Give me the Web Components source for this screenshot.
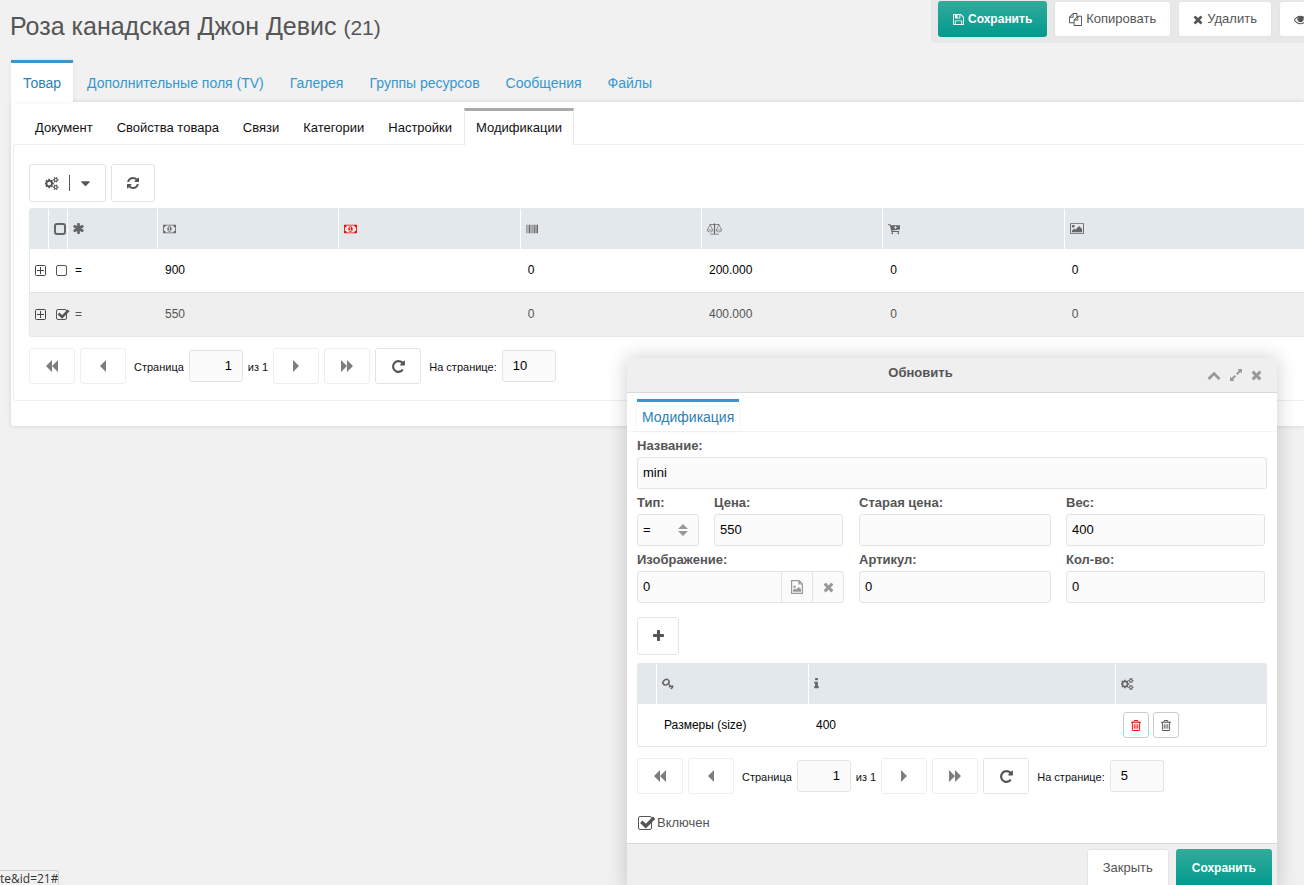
<!DOCTYPE html>
<html lang="ru">
<head>
<meta charset="utf-8">
<title>Роза канадская Джон Девис</title>
<style>
  html, body { height: 100%; }
  body { margin: 0; overflow: hidden; background: #f1f1f1; color: #555; font: 13px/16px "Liberation Sans", Arial, sans-serif; }
</style>
</head>
<body>
<product-page></product-page>

<script>
const define = (name, html, setup) => {
  const template = document.createElement('template');
  template.innerHTML = '<style>*{box-sizing:border-box}:host([hidden]){display:none}</style>' + html;
  customElements.define(name, class extends HTMLElement {
    connectedCallback() {
      if (this.shadowRoot) return;
      const root = this.attachShadow({ mode: 'open' });
      root.append(template.content.cloneNode(true));
      if (setup) setup(this, root);
    }
  });
};

/* name: [viewBox, markup] */
const ICONS = {
  save: ['128 0 1536 1792', '<path d="M512 1536h768v-384h-768v384zm896 0h128v-896q0-14-10-38.5t-20-34.5l-281-281q-10-10-34-20t-39-10v416q0 40-28 68t-68 28h-576q-40 0-68-28t-28-68v-416h-128v1280h128v-416q0-40 28-68t68-28h832q40 0 68 28t28 68v416zm-384-928v-320q0-13-9.5-22.5t-22.5-9.5h-192q-13 0-22.5 9.5t-9.5 22.5v320q0 13 9.5 22.5t22.5 9.5h192q13 0 22.5-9.5t9.5-22.5zm640 32v928q0 40-28 68t-68 28h-1344q-40 0-68-28t-28-68v-1344q0-40 28-68t68-28h928q40 0 88 20t76 48l280 280q28 28 48 76t20 88z"/>'],
  copy: ['0 0 1792 1792', '<path d="M1696 384q40 0 68 28t28 68v1216q0 40-28 68t-68 28h-960q-40 0-68-28t-28-68v-288h-544q-40 0-68-28t-28-68v-672q0-40 20-88t48-76l408-408q28-28 76-48t88-20h416q40 0 68 28t28 68v328q68-40 128-40h416zm-544 213l-299 299h299v-299zm-640-384l-299 299h299v-299zm196 647l316-316v-416h-384v416q0 40-28 68t-68 28h-416v640h512v-256q0-40 20-88t48-76zm956 804v-1152h-384v416q0 40-28 68t-68 28h-416v640h896z"/>'],
  times: ['192 0 1408 1792', '<path d="M1490 1322q0 40-28 68l-136 136q-28 28-68 28t-68-28l-294-294-294 294q-28 28-68 28t-68-28l-136-136q-28-28-28-68t28-68l294-294-294-294q-28-28-28-68t28-68l136-136q28-28 68-28t68 28l294 294 294-294q28-28 68-28t68 28l136 136q28 28 28 68t-28 68l-294 294 294 294q28 28 28 68z"/>'],
  eye: ['0 0 1792 1792', '<path d="M1664 960q-152-236-381-353 61 104 61 225 0 185-131.5 316.5t-316.5 131.5-316.5-131.5-131.5-316.5q0-121 61-225-229 117-381 353 133 205 333.5 326.5t434.5 121.5 434.5-121.5 333.5-326.5zm-720-384q0-20-14-34t-34-14q-125 0-214.5 89.5t-89.5 214.5q0 20 14 34t34 14 34-14 14-34q0-86 61-147t147-61q20 0 34-14t14-34zm848 384q0 34-20 69-140 230-376.5 368.5t-499.5 138.5-499.5-139-376.5-368q-20-35-20-69t20-69q140-229 376.5-368t499.5-139 499.5 139 376.5 368q20 35 20 69z"/><circle cx="896" cy="860" r="330"/>'],
  cogs: ['0 0 1920 1792', '<path d="M832 896q0-106-75-181t-181-75-181 75-75 181 75 181 181 75 181-75 75-181zm768 512q0-52-38-90t-90-38-90 38-38 90q0 53 37.5 90.5t90.5 37.5 90.5-37.5 37.5-90.5zm0-1024q0-52-38-90t-90-38-90 38-38 90q0 53 37.5 90.5t90.5 37.5 90.5-37.5 37.5-90.5zm-384 421v185q0 10-7 19.5t-16 10.5l-155 24q-11 35-32 76 34 48 90 115 7 11 7 20 0 12-7 19-23 30-82.5 89.5t-78.5 59.5q-11 0-21-7l-115-90q-37 19-77 31-11 108-23 155-7 24-30 24h-186q-11 0-20-7.5t-10-17.5l-23-153q-34-10-75-31l-118 89q-7 7-20 7-11 0-21-8-144-133-144-160 0-9 7-19 10-14 41-53t47-61q-23-44-35-82l-152-24q-10-1-17-9.5t-7-19.5v-185q0-10 7-19.5t16-10.5l155-24q11-35 32-76-34-48-90-115-7-11-7-20 0-12 7-20 22-30 82-89t79-59q11 0 21 7l115 90q34-18 77-32 11-108 23-154 7-24 30-24h186q11 0 20 7.5t10 17.5l23 153q34 10 75 31l118-89q8-7 20-7 11 0 21 8 144 133 144 160 0 8-7 19-12 16-42 54t-45 60q23 48 34 82l152 23q10 2 17 10.5t7 19.5zm640 533v140q0 16-149 31-12 27-30 52 51 113 51 138 0 4-4 7-122 71-124 71-8 0-46-47t-52-68q-20 2-30 2t-30-2q-14 21-52 68t-46 47q-2 0-124-71-4-3-4-7 0-25 51-138-18-25-30-52-149-15-149-31v-140q0-16 149-31 13-29 30-52-51-113-51-138 0-4 4-7 4-2 35-20t59-34 30-16q8 0 46 46.5t52 67.5q20-2 30-2t30 2q51-71 92-112l6-2q4 0 124 70 4 3 4 7 0 25-51 138 17 23 30 52 149 15 149 31zm0-1024v140q0 16-149 31-12 27-30 52 51 113 51 138 0 4-4 7-122 71-124 71-8 0-46-47t-52-68q-20 2-30 2t-30-2q-14 21-52 68t-46 47q-2 0-124-71-4-3-4-7 0-25 51-138-18-25-30-52-149-15-149-31v-140q0-16 149-31 13-29 30-52-51-113-51-138 0-4 4-7 4-2 35-20t59-34 30-16q8 0 46 46.5t52 67.5q20-2 30-2t30 2q51-71 92-112l6-2q4 0 124 70 4 3 4 7 0 25-51 138 17 23 30 52 149 15 149 31z"/>'],
  refresh: ['128 0 1536 1792', '<path d="M1639 1056q0 5-1 7-64 268-268 434.5t-478 166.5q-146 0-282.5-55t-243.5-157l-129 129q-19 19-45 19t-45-19-19-45v-448q0-26 19-45t45-19h448q26 0 45 19t19 45-19 45l-137 137q71 66 161 102t187 36q134 0 250-65t186-179q11-17 53-117 8-23 30-23h192q13 0 22.5 9.5t9.5 22.5zm25-800v448q0 26-19 45t-45 19h-448q-26 0-45-19t-19-45 19-45l138-138q-148-137-349-137-134 0-250 65t-186 179q-11 17-53 117-8 23-30 23h-199q-13 0-22.5-9.5t-9.5-22.5v-7q65-268 270-434.5t480-166.5q146 0 284 55.5t245 156.5l130-129q19-19 45-19t45 19 19 45z"/>'],
  caret: ['384 0 1024 1792', '<path d="M1408 704q0 26-19 45l-448 448q-19 19-45 19t-45-19l-448-448q-19-19-19-45t19-45 45-19h896q26 0 45 19t19 45z"/>'],
  asterisk: ['170 0 1450 1792', '<path d="M1546 1050q46 26 59.5 77.5t-12.5 97.5l-64 110q-26 46-77.5 59.5t-97.5-12.5l-266-153v307q0 52-38 90t-90 38h-128q-52 0-90-38t-38-90v-307l-266 153q-46 26-97.5 12.5t-77.5-59.5l-64-110q-26-46-12.5-97.5t59.5-77.5l266-154-266-154q-46-26-59.5-77.5t12.5-97.5l64-110q26-46 77.5-59.5t97.5 12.5l266 153v-307q0-52 38-90t90-38h128q52 0 90 38t38 90v307l266-153q46-26 97.5-12.5t77.5 59.5l64 110q26 46 12.5 97.5t-59.5 77.5l-266 154z"/>'],
  money: ['0 0 1920 1792', '<path d="M768 1152h384v-96h-128v-448h-114l-148 137 77 80q42-37 55-57h2v288h-128v96zm512-256q0 70-21 142t-59.5 134-101.5 101-138 39-138-39-101.5-101-59.5-134-21-142 21-142 59.5-134 101.5-101 138-39 138 39 101.5 101 59.5 134 21 142zm512 256v-512q-106 0-181-75t-75-181h-1152q0 106-75 181t-181 75v512q106 0 181 75t75 181h1152q0-106 75-181t181-75zm128-832v1152q0 26-19 45t-45 19h-1792q-26 0-45-19t-19-45v-1152q0-26 19-45t45-19h1792q26 0 45 19t19 45z"/>'],
  barcode: ['0 0 1792 1792', '<path d="M0 256h80v1280H0zM150 256h60v1280h-60zM300 256h60v1280h-60zM450 256h150v1280H450zM670 256h60v1280h-60zM830 256h150v1280H830zM1070 256h60v1280h-60zM1220 256h150v1280h-150zM1440 256h70v1280h-70zM1570 256h222v1280h-222z"/>'],
  scales: ['0 0 2304 1792', '<path d="M1080 0h144v130h660v110h-640v1380h560v130H500v-130h560V240H420V130h660z"/><path d="M60 1050L470 230l410 820M1424 1050l410-820 410 820" fill="none" stroke="currentColor" stroke-width="100"/><path d="M0 1050h940q-30 300-470 300T0 1050zm1364 0h940q-30 300-470 300t-470-300z" fill="none" stroke="currentColor" stroke-width="90"/>'],
  cart: ['0 0 1792 1792', '<path fill-rule="evenodd" d="M0 192h360l60 160h1372v610l-1150 170 20 80h1010v130H520L270 330H0zM1060 460v160H900v110h160v160h120V730h160V620h-160V460z"/><circle cx="640" cy="1540" r="135"/><circle cx="1540" cy="1540" r="135"/><path d="M570 1250h130v200H570zm900 0h130v200h-130z"/>'],
  picture: ['-64 0 1920 1792', '<path d="M576 576q0 80-56 136t-136 56-136-56-56-136 56-136 136-56 136 56 56 136zm1024 384v448h-1408v-192l320-320 160 160 512-512zm96-704h-1600q-13 0-22.5 9.5t-9.5 22.5v1216q0 13 9.5 22.5t22.5 9.5h1600q13 0 22.5-9.5t9.5-22.5v-1216q0-13-9.5-22.5t-22.5-9.5zm160 32v1216q0 66-47 113t-113 47h-1600q-66 0-113-47t-47-113v-1216q0-66 47-113t113-47h1600q66 0 113 47t47 113z"/>'],
  repeat: ['128 0 1536 1792', '<path d="M1664 256v448q0 26-19 45t-45 19h-448q-42 0-59-40-17-39 14-69l138-138q-148-137-349-137-104 0-198.5 40.5t-163.5 109.5-109.5 163.5-40.5 198.5 40.5 198.5 109.5 163.5 163.5 109.5 198.5 40.5q119 0 225-52t179-147q7-10 23-12 15 0 25 9l137 138q9 8 9.5 20.5t-7.5 22.5q-109 132-264 204.5t-327 72.5q-156 0-298-61t-245-164-164-245-61-298 61-298 164-245 245-164 298-61q147 0 284.5 55.5t244.5 156.5l130-129q29-31 70-14 39 17 39 59z"/>'],
  plus: ['192 0 1408 1792', '<path d="M1600 736v192q0 40-28 68t-68 28h-416v416q0 40-28 68t-68 28h-192q-40 0-68-28t-28-68v-416h-416q-40 0-68-28t-28-68v-192q0-40 28-68t68-28h416v-416q0-40 28-68t68-28h192q40 0 68 28t28 68v416h416q40 0 68 28t28 68z"/>'],
  up: ['0 0 1792 1792', '<path d="M1683 1331l-166 165q-19 19-45 19t-45-19l-531-531-531 531q-19 19-45 19t-45-19l-166-165q-19-19-19-45.5t19-45.5l742-741q19-19 45-19t45 19l742 741q19 19 19 45.5t-19 45.5z"/>'],
  expand: ['0 0 14 14', '<path d="M8.500 1H13v4.500l-1.500-1.500-3 3L7 5.500l3-3zM5.500 13H1V8.500L2.500 10l3-3L7 8.500l-3 3z"/>'],
  trash: ['192 0 1408 1792', '<path d="M704 736v576q0 14-9 23t-23 9h-64q-14 0-23-9t-9-23v-576q0-14 9-23t23-9h64q14 0 23 9t9 23zm256 0v576q0 14-9 23t-23 9h-64q-14 0-23-9t-9-23v-576q0-14 9-23t23-9h64q14 0 23 9t9 23zm256 0v576q0 14-9 23t-23 9h-64q-14 0-23-9t-9-23v-576q0-14 9-23t23-9h64q14 0 23 9t9 23zm128 724v-948h-896v948q0 22 7 40.5t14.5 27 10.5 8.5h832q3 0 10.5-8.5t14.5-27 7-40.5zm-672-1076h448l-48-117q-7-9-17-11h-317q-10 2-17 11zm928 32v64q0 14-9 23t-23 9h-96v948q0 83-47 143.5t-113 60.5h-832q-66 0-113-58.5t-47-141.5v-952h-96q-14 0-23-9t-9-23v-64q0-14 9-23t23-9h309l70-167q15-37 54-63t79-26h320q40 0 79 26t54 63l70 167h309q14 0 23 9t9 23z"/>'],
  info: ['576 0 640 1792', '<path d="M1216 1344v128q0 26-19 45t-45 19h-512q-26 0-45-19t-19-45v-128q0-26 19-45t45-19h64v-384h-64q-26 0-45-19t-19-45v-128q0-26 19-45t45-19h384q26 0 45 19t19 45v576h64q26 0 45 19t19 45zm-128-1152v192q0 26-19 45t-45 19h-256q-26 0-45-19t-19-45v-192q0-26 19-45t45-19h256q26 0 45 19t19 45z"/>'],
  key: ['0 0 12 12', '<ellipse cx="4" cy="4.200" rx="3.200" ry="2.600" transform="rotate(-35 4 4.200)" fill="none" stroke="currentColor" stroke-width="1.600"/><path d="M5.800 5.600l5.200 4.400M8.200 7.800L7 9.400M10.200 9.400l-1.400 1.600M9.800 7.400l1.500 1.200" fill="none" stroke="currentColor" stroke-width="1.300"/>'],
  file: ['0 0 12 14', '<path d="M.6.600h7.400l3.400 3.400v9.400H.6zM8 .600V4h3.400" fill="none" stroke="currentColor" stroke-width="1.200"/><circle cx="3.600" cy="6.700" r="1.200"/><path d="M2 11.800V10l1.600-1.400 1.200 1L7.800 7 10 9.200v2.600z"/>'],
  first: ['0 0 12 12', '<path d="M6 0v12L0 6zM12 0v12L6 6z"/>'],
  prev: ['0 0 6 12', '<path d="M6 0v12L0 6z"/>'],
  next: ['0 0 6 12', '<path d="M0 0v12l6-6z"/>'],
  last: ['0 0 12 12', '<path d="M0 0v12l6-6zM6 0v12l6-6z"/>'],
  tree: ['0 0 11 11', '<rect x=".5" y=".5" width="10" height="10" rx="1" fill="none" stroke="currentColor"/><path d="M2 5h7v1H2zM5 2h1v7H5z"/>'],
  sort: ['0 0 10 14', '<path d="M5 1l5 5H0zM5 13L0 8h10z"/>']
};

define('ui-icon', `
  <style>:host{display:inline-flex;flex:none}svg{display:block;fill:currentColor}</style>
  <svg aria-hidden="true"></svg>`, (host, root) => {
  const [box, body] = ICONS[host.getAttribute('name')];
  const size = Number(host.getAttribute('size') || 13);
  const [, , w, h] = box.split(' ').map(Number);
  const svg = root.querySelector('svg');
  svg.setAttribute('viewBox', box);
  svg.setAttribute('height', size);
  svg.setAttribute('width', Math.round(size * w / h));
  svg.innerHTML = body;
});

define('ui-button', `
  <style>
    :host{display:block;flex:none}
    button{display:flex;align-items:center;justify-content:center;gap:4px;width:100%;height:var(--h,38px);min-width:var(--w,0);padding:0 var(--pad,14px);
      border:1px solid #e4e4e4;border-radius:3px;background:#fff;color:#555;font:inherit;white-space:nowrap}
    :host([primary]) button{border-color:transparent;background:linear-gradient(#32ab9a,#009a8e) border-box;color:#fff;font-size:12px;font-weight:bold}
    :host([faded]) button{border-color:#eee;color:#7d7d7d}
    :host([compact]) button{padding:0;border-color:#ccc}
    :host([danger]) button{color:#f00}
  </style>
  <button type="button"><slot></slot></button>`, (host, root) => {
  const label = host.getAttribute('label');
  if (label) root.querySelector('button').setAttribute('aria-label', label);
});

define('ui-tab', `
  <style>
    :host{display:flex;font-size:14px}
    a{display:flex;align-items:center;padding:3px 13px 0;color:#3697cd;text-decoration:none;white-space:nowrap}
    :host([active]) a{margin-right:1px;padding:0 12px;border-top:3px solid #3697cd;background:#fff;color:#2a7fb5;box-shadow:0 0 4px #0001}
    :host([inner]){font-size:13px}
    :host([inner]) a{padding:2px 12px 0;color:#111}
    :host([inner][active]) a{padding:0 11px;border:1px solid #e8e8e8;border-top:3px solid #aaa;border-bottom:0;box-shadow:none}
    :host([snug]) a{padding:0 5px}
  </style>
  <a href="#"><slot></slot></a>`);

define('ui-check', `
  <style>
    :host{display:inline-grid;flex:none;width:var(--box,11px);height:var(--box,11px)}
    input{grid-area:1/1;appearance:none;width:100%;height:100%;margin:0;border:1px solid #555;border-radius:2px;background:none}
    :host([heavy]) input{border-width:2px;border-color:#666;border-radius:3px}
    svg{grid-area:1/1;display:none;width:120%;height:100%;overflow:visible}
    :host([checked]) svg{display:block}
  </style>
  <input type="checkbox"><svg viewBox="0 0 13 11" aria-hidden="true"><path d="M2.500 4.500L6 7.800 12.500 1.400" fill="none" stroke="#555" stroke-width="2.600"/></svg>`, (host, root) => {
  const input = root.querySelector('input');
  input.checked = host.hasAttribute('checked');
  input.setAttribute('aria-label', host.getAttribute('label'));
});

define('ui-field', `
  <style>
    :host{display:block;min-width:0}
    label{display:block;height:21px;margin-bottom:4px;padding-top:7px;line-height:14px;font-weight:bold;white-space:nowrap}
    .box{display:grid;grid-template-columns:minmax(0,1fr) auto;height:32px;border:1px solid #e4e4e4;border-radius:3px;background:#fbfbfb}
    input,select{grid-area:1/1/2/3;width:100%;min-width:0;border:0;margin:0;padding:0 5px;background:none;color:#000;font:inherit;appearance:none;outline:0}
    .mark{display:none;grid-area:1/1/2/3;justify-self:end;align-self:center;margin-right:10px;color:#999;pointer-events:none}
    :host([select]) .mark{display:flex}
    :host([extras]) input{grid-area:1/1}
  </style>
  <label for="f"></label>
  <div class="box"><ui-icon class="mark" name="sort" size="14"></ui-icon><slot></slot></div>`, (host, root) => {
  root.querySelector('label').textContent = host.getAttribute('label');
  const value = host.getAttribute('value') || '';
  const control = document.createElement(host.hasAttribute('select') ? 'select' : 'input');
  control.id = 'f';
  if (host.hasAttribute('select')) control.add(new Option(value));
  else { control.type = 'text'; control.value = value; }
  root.querySelector('.box').prepend(control);
});

define('ui-field-tools', `
  <style>
    :host{display:flex;grid-area:1/2}
    button{display:flex;align-items:center;justify-content:center;width:31px;padding:0;border:0;border-left:1px solid #e4e4e4;background:none;color:#999}
  </style>
  <button type="button" aria-label="Выбрать файл"><ui-icon name="file" size="14"></ui-icon></button>
  <button type="button" aria-label="Очистить"><ui-icon name="times" size="14"></ui-icon></button>`);

define('ui-pager', `
  <style>
    :host{display:flex;align-items:center;gap:5px;--h:36px;--w:46px;color:#111}
    span,label{font-size:11px;padding-top:2px;white-space:nowrap}
    .lead{margin-left:3px}
    input{width:54px;height:32px;padding:0 10px 2px;border:1px solid #e4e4e4;border-radius:3px;background:#fbfbfb;color:#000;font:inherit}
    #page{text-align:right}
  </style>
  <ui-button faded label="Первая"><ui-icon name="first" size="12"></ui-icon></ui-button>
  <ui-button faded label="Предыдущая"><ui-icon name="prev" size="12"></ui-icon></ui-button>
  <label class="lead" for="page">Страница</label><input id="page" type="text" value="1"><span>из 1</span>
  <ui-button faded label="Следующая"><ui-icon name="next" size="12"></ui-icon></ui-button>
  <ui-button faded label="Последняя"><ui-icon name="last" size="12"></ui-icon></ui-button>
  <ui-button label="Обновить"><ui-icon name="repeat" size="15"></ui-icon></ui-button>
  <label class="lead" for="size">На странице:</label><input id="size" type="text">`, (host, root) => {
  root.querySelector('#size').value = host.getAttribute('size');
});

const TABLE_CSS = `
    :host{display:block;border:1px solid #e3e8ec;border-top:0;border-radius:3px;overflow:hidden;background:#fff}
    table{width:100%;border-collapse:separate;border-spacing:0;table-layout:fixed;font-size:12px;color:#000}
    th,td{padding:0 7px;text-align:left;font-weight:normal;white-space:nowrap}
    th{height:41px;padding:0 5px 2px;border-top:1px solid #e3e8ec;background:#e3e8ec;color:#666}
    th:not(:last-child){background:linear-gradient(#fff,#fff) right/1px 100% no-repeat #e3e8ec}
    ui-icon,ui-check{vertical-align:middle}`;

define('variants-grid', `
  <style>${TABLE_CSS}
    :host{border-right:0;border-radius:3px 0 0 3px}
    td{height:44px;padding-bottom:2px;border-bottom:1px solid #e3e3e3}
    .tight{padding-left:5px;padding-right:5px}
    tr:last-child td{height:43px;border-bottom:0}
    .picked td{background:#efefef;color:#555}
    th ui-check{--box:12px}
    .red{color:#f00}
    .tree{color:#444}
  </style>
  <table>
    <colgroup><col style="width:19px"><col style="width:19px"><col style="width:90px"><col><col><col><col><col><col><col style="width:58px"></colgroup>
    <thead><tr>
      <th></th>
      <th class="tight"><ui-check heavy label="Выбрать все"></ui-check></th>
      <th><ui-icon name="asterisk" size="13"></ui-icon></th>
      <th><ui-icon name="money" size="12"></ui-icon></th>
      <th class="red"><ui-icon name="money" size="12"></ui-icon></th>
      <th><ui-icon name="barcode" size="12"></ui-icon></th>
      <th><ui-icon name="scales" size="12"></ui-icon></th>
      <th><ui-icon name="cart" size="12"></ui-icon></th>
      <th colspan="2"><ui-icon name="picture" size="13"></ui-icon></th>
    </tr></thead>
    <tbody>
      <tr><td class="tight"><ui-icon class="tree" name="tree" size="11"></ui-icon></td><td><ui-check label="Выбрать 900"></ui-check></td><td>=</td><td>900</td><td></td><td>0</td><td>200.000</td><td>0</td><td colspan="2">0</td></tr>
      <tr class="picked"><td class="tight"><ui-icon class="tree" name="tree" size="11"></ui-icon></td><td><ui-check checked label="Выбрать 550"></ui-check></td><td>=</td><td>550</td><td></td><td>0</td><td>400.000</td><td>0</td><td colspan="2">0</td></tr>
    </tbody>
  </table>`);

define('options-grid', `
  <style>${TABLE_CSS}
    td{height:42px}
    .tools{display:flex;gap:4px;--h:26px;--w:26px}
  </style>
  <table>
    <colgroup><col style="width:19px"><col style="width:152px"><col><col style="width:150px"></colgroup>
    <thead><tr>
      <th></th>
      <th><ui-icon name="key" size="12"></ui-icon></th>
      <th><ui-icon name="info" size="13"></ui-icon></th>
      <th><ui-icon name="cogs" size="12"></ui-icon></th>
    </tr></thead>
    <tbody><tr><td></td><td>Размеры (size)</td><td>400</td><td><div class="tools">
      <ui-button compact danger label="Удалить"><ui-icon name="trash" size="13"></ui-icon></ui-button>
      <ui-button compact label="Удалить значение"><ui-icon name="trash" size="13"></ui-icon></ui-button>
    </div></td></tr></tbody>
  </table>`);

define('edit-window', `
  <style>
    :host{display:block;border-radius:4px;background:#fff;box-shadow:0 0 20px #0003}
    header{display:flex;align-items:center;height:35px;padding-right:15px;border-bottom:1px solid #d8d8d8;border-radius:4px 4px 0 0;background:#efefef}
    h2{flex:1;margin:0;padding-left:7px;font-size:13px;line-height:30px;height:34px;text-align:center}
    header div{display:flex;align-items:center;gap:8px}
    header button{display:flex;padding:0;border:0;background:none;color:#999}
    nav{display:flex;height:39px;padding:6px 10px 0;border-bottom:1px solid #f4f4f4}
    .body{padding:0 10px 12px}
    .row{display:grid;grid-template-columns:207fr 192fr 199fr;gap:15px;padding-right:2px}
    .pair{display:grid;grid-template-columns:62px 1fr;gap:15px;padding-right:1px}
    .add{width:42px;margin:14px 0 8px}
    ui-pager{margin:11px 0 21px}
    .on{display:flex;align-items:center;gap:5px;height:16px;padding-left:1px}
    .on ui-check{--box:14px}
    footer{display:flex;justify-content:flex-end;gap:7px;padding:5px 5px 6px;border-top:1px solid #d8d8d8;background:#efefef;--pad:15px}
  </style>
  <header><h2>Обновить</h2><div>
    <button type="button" aria-label="Свернуть"><ui-icon name="up" size="14"></ui-icon></button>
    <button type="button" aria-label="Развернуть"><ui-icon name="expand" size="14"></ui-icon></button>
    <button type="button" aria-label="Закрыть окно"><ui-icon name="times" size="14"></ui-icon></button>
  </div></header>
  <nav><ui-tab active snug>Модификация</ui-tab></nav>
  <div class="body">
    <ui-field label="Название:" value="mini"></ui-field>
    <div class="row">
      <div class="pair"><ui-field select label="Тип:" value="="></ui-field><ui-field label="Цена:" value="550"></ui-field></div>
      <ui-field label="Старая цена:"></ui-field>
      <ui-field label="Вес:" value="400"></ui-field>
    </div>
    <div class="row">
      <ui-field extras label="Изображение:" value="0"><ui-field-tools></ui-field-tools></ui-field>
      <ui-field label="Артикул:" value="0"></ui-field>
      <ui-field label="Кол-во:" value="0"></ui-field>
    </div>
    <ui-button class="add" label="Добавить"><ui-icon name="plus" size="14"></ui-icon></ui-button>
    <options-grid></options-grid>
    <ui-pager size="5"></ui-pager>
    <div class="on"><ui-check checked label="Включен"></ui-check><span>Включен</span></div>
  </div>
  <footer><ui-button>Закрыть</ui-button><ui-button primary>Сохранить</ui-button></footer>`);

define('product-page', `
  <style>
    :host{display:block;position:relative;height:100%;overflow:hidden}
    .top{display:flex;align-items:flex-start;height:60px;padding-left:10px}
    h1{flex:1;margin:0;padding-top:11px;font-size:25px;line-height:30px;font-weight:normal;white-space:nowrap}
    small{font-size:21px}
    .actions{display:flex;flex:0 0 373px;gap:7px;height:43px;padding:1px 0 6px 7px;overflow:hidden;border-radius:0 0 0 4px;background:#e8e8e8;--h:36px}
    .tabs{display:flex;height:42px;padding-left:11px}
    main{margin-left:11px;padding:6px 0 25px 2px;border-radius:0 0 0 3px;background:#fff;box-shadow:0 0 5px #0002}
    .inner{display:flex;height:37px;margin-bottom:-1px;padding-left:10px;position:relative}
    .panel{padding:19px 0 16px 15px;border:1px solid #eee;border-right:0;border-radius:3px 0 0 3px}
    .bar{display:flex;gap:5px;margin-bottom:6px;--pad:15px}
    .bar i{width:1px;height:16px;margin:0 7px 0 6px;background:#555}
    ui-pager{margin-top:11px}
    edit-window{position:absolute;top:358px;right:27px;width:650px}
    .status{position:absolute;left:0;bottom:0;height:15px;padding:2px 0 0;overflow:hidden;border:1px solid #ccc;border-width:1px 1px 0 0;border-radius:0 3px 0 0;font:12px/12px "Open Sans","Noto Sans",sans-serif;color:#333}
  </style>
  <div class="top">
    <h1>Роза канадская Джон Девис <small>(21)</small></h1>
    <div class="actions">
      <ui-button primary><ui-icon name="save" size="13"></ui-icon>Сохранить</ui-button>
      <ui-button><ui-icon name="copy" size="13"></ui-icon>Копировать</ui-button>
      <ui-button><ui-icon name="times" size="13"></ui-icon>Удалить</ui-button>
      <ui-button label="Просмотр"><ui-icon name="eye" size="13"></ui-icon></ui-button>
    </div>
  </div>
  <nav class="tabs"><ui-tab active>Товар</ui-tab><ui-tab>Дополнительные поля (TV)</ui-tab><ui-tab>Галерея</ui-tab><ui-tab>Группы ресурсов</ui-tab><ui-tab>Сообщения</ui-tab><ui-tab>Файлы</ui-tab></nav>
  <main>
    <nav class="inner"><ui-tab inner>Документ</ui-tab><ui-tab inner>Свойства товара</ui-tab><ui-tab inner>Связи</ui-tab><ui-tab inner>Категории</ui-tab><ui-tab inner>Настройки</ui-tab><ui-tab inner active>Модификации</ui-tab></nav>
    <section class="panel">
      <div class="bar">
        <ui-button label="Действия"><ui-icon name="cogs" size="13"></ui-icon><i></i><ui-icon name="caret" size="15"></ui-icon></ui-button>
        <ui-button label="Обновить"><ui-icon name="refresh" size="14"></ui-icon></ui-button>
      </div>
      <variants-grid></variants-grid>
      <ui-pager size="10"></ui-pager>
    </section>
  </main>
  <edit-window></edit-window>
  <div class="status">te&amp;id=21#</div>`);
</script>
</body>
</html>
